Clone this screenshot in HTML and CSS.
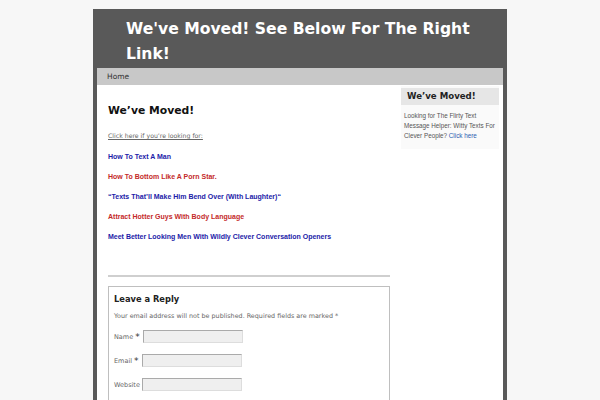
FILE: index.html
```html
<!DOCTYPE html>
<html>
<head>
<meta charset="utf-8">
<link rel="stylesheet" href="styles.css">
</head>
<body>
<div class="wrap">
  <div class="header">
    <h1 class="site-title">We've Moved! See Below For The Right Link!</h1>
  </div>
  <div class="nav"><a class="nav-link">Home</a></div>
  <div class="page">
    <div class="main">
      <h2 class="post-title">We’ve Moved!</h2>
      <p class="intro"><a>Click here if you’re looking for:</a></p>
      <p class="lnk blue">How To Text A Man</p>
      <p class="lnk red">How To Bottom Like A Porn Star.</p>
      <p class="lnk blue">“Texts That’ll Make Him Bend Over (With Laughter)“</p>
      <p class="lnk red">Attract Hotter Guys With Body Language</p>
      <p class="lnk blue">Meet Better Looking Men With Wildly Clever Conversation Openers</p>
      <div class="rule"></div>
      <div class="reply">
        <h3 class="reply-title">Leave a Reply</h3>
        <p class="note">Your email address will not be published. Required fields are marked *</p>
        <div class="field"><span class="lab">Name</span><span class="star">*</span><span class="inp"></span></div>
        <div class="field"><span class="lab">Email</span><span class="star">*</span><span class="inp"></span></div>
        <div class="field"><span class="lab">Website</span><span class="inp"></span></div>
      </div>
    </div>
    <div class="side">
      <div class="widget">
        <h4 class="widget-title">We’ve Moved!</h4>
        <p class="widget-text">Looking for The Flirty Text Message Helper: Witty Texts For Clever People? <a class="wlink">Click here</a></p>
      </div>
    </div>
  </div>
</div>
</body>
</html>
```
FILE: styles.css
```css
html, body { margin: 0; padding: 0; }
body { background: #f7f7f7; font-family: "DejaVu Sans", sans-serif; height: 400px; overflow: hidden; }
.wrap { width: 414px; margin: 9px auto 0; background: #595959; padding: 0 4px; box-sizing: border-box; }
.header { padding: 8px 20px 4px 29px; height: 59px; box-sizing: border-box; }
.site-title { margin: 0; color: #fff; font-size: 15.6px; line-height: 25px; font-weight: bold; letter-spacing: 0; }
.nav { background: #c8c8c8; height: 17px; padding-left: 10px; display: flex; align-items: center; }
.nav-link { font-size: 7.5px; color: #333; }
.page { background: #fff; display: flex; padding: 0 4px 0 11px; height: 340px; }
.main { width: 282px; padding-top: 19px; flex: none; }
.post-title { margin: 0 0 15px; font-size: 10.8px; font-weight: bold; color: #111; }
.intro { margin: 0 0 13px; font-size: 6.2px; }
.intro a { color: #666; text-decoration: underline; }
.lnk { margin: 0 0 11px; font-family: "Liberation Sans", Arial, sans-serif; font-weight: bold; font-size: 7px; line-height: 9px; }
.blue { color: #1c1ca8; }
.red { color: #c42a2a; }
.rule { height: 2px; background: #cfcfcf; margin-top: 34px; }
.reply { border: 1px solid #bfbfbf; margin-top: 9px; padding: 7px 5px 0; height: 200px; }
.reply-title { margin: 0 0 8px; font-size: 8.3px; font-weight: bold; color: #222; }
.note { margin: 0 0 10px; font-size: 6.4px; color: #666; }
.field { display: flex; align-items: center; margin-bottom: 11px; height: 13px; }
.lab { font-size: 6.5px; color: #666; margin-right: 2px; }
.star { font-size: 9px; color: #333; margin-right: 3px; }
.inp { width: 98px; height: 11px; background: #efefef; border: 1px solid #aaa; border-right-color: #ddd; border-bottom-color: #ddd; }
.side { margin-left: 11px; width: 98px; flex: none; padding-top: 1px; }
.widget { background: #fafafa; padding: 2px 0 8px; }
.widget-title { margin: 0 0 6px; background: #e6e6e6; height: 17px; line-height: 17px; padding-left: 6px; font-size: 8.6px; font-weight: bold; color: #222; }
.widget-text { margin: 0 -2px 0 0; padding: 0 0 0 3px; font-family: "Liberation Sans", Arial, sans-serif; font-size: 6.3px; line-height: 10px; color: #555; }
.wlink { color: #2a5db0; }
```
